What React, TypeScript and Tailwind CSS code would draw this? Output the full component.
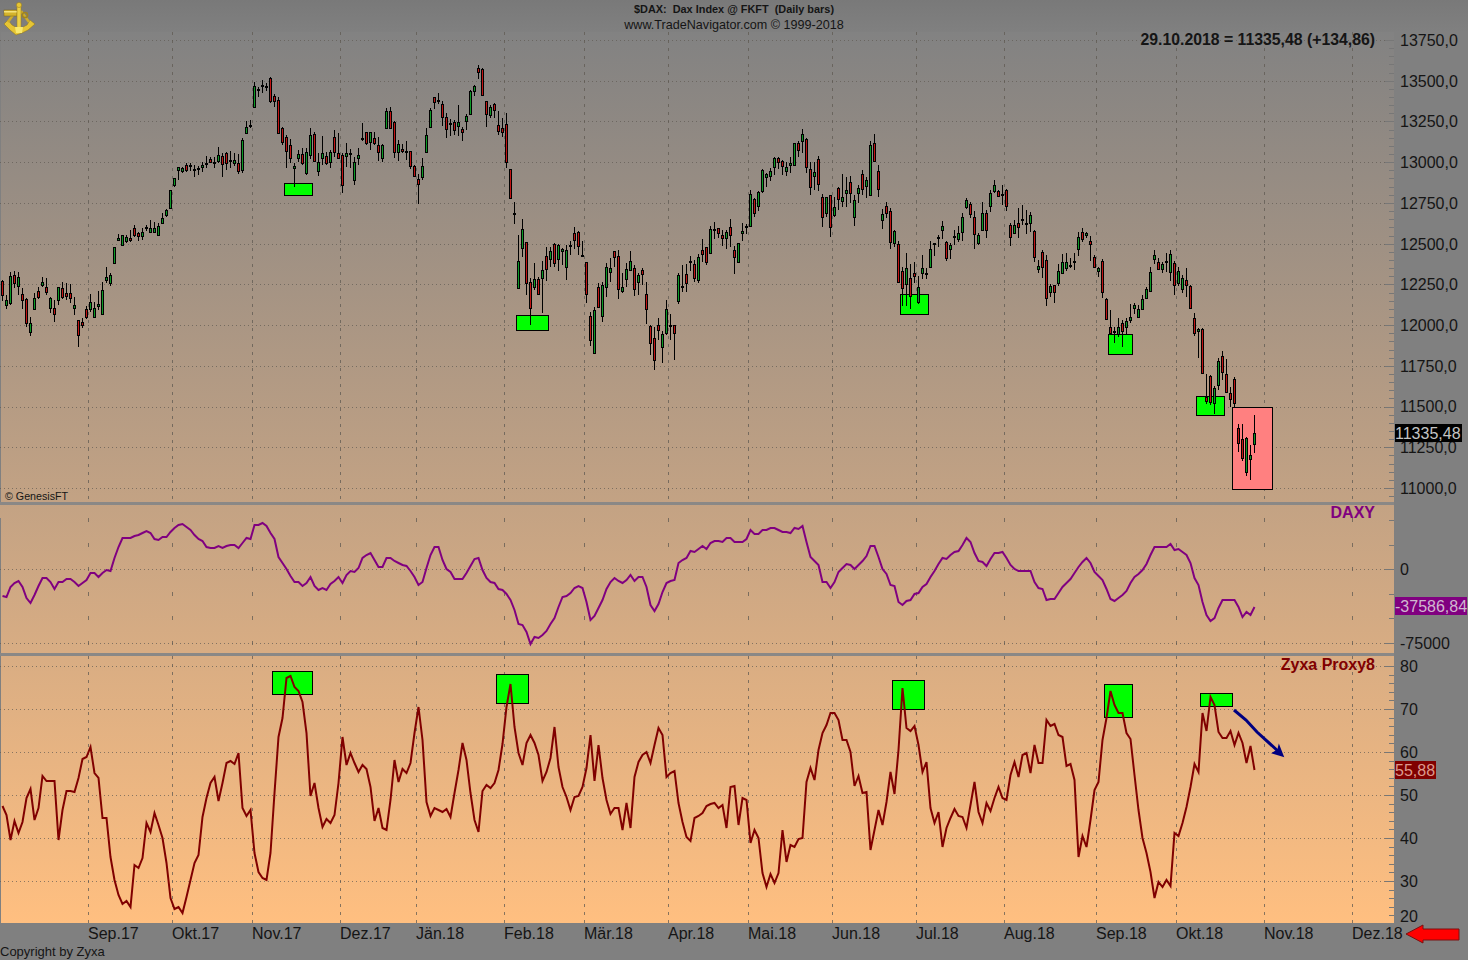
// DAX daily chart with two indicator panes. All data is in page pixels.
type Candle = [number, number, number, number, number] // high, body top, body bottom, low, 1 = up

const candles: Candle[] = [
  [280,281,295,301,0],[295,300,305,309,1],[272,276,303,305,1],[271,275,283,288,0],[272,277,286,295,1],[288,294,300,309,0],[298,299,323,327,0],[317,323,332,336,1],
  [293,298,309,309,1],[287,291,297,299,0],[277,282,285,287,1],[278,287,292,295,0],[297,298,308,313,1],[300,308,314,322,0],[287,287,300,305,1],[282,288,297,299,0],
  [283,293,296,300,0],[284,293,298,303,0],[297,305,308,315,1],[320,320,335,347,0],[318,322,325,328,0],[306,309,317,319,0],[294,302,309,312,1],[302,308,317,318,1],
  [291,304,306,310,1],[282,290,314,315,1],[267,277,280,283,1],[273,275,283,286,1],[247,247,263,264,1],[234,238,240,241,1],[235,235,245,246,1],[235,237,241,243,1],
  [230,238,240,242,0],[225,228,235,237,0],[232,233,236,241,0],[228,232,236,240,1],[225,227,228,231,1],[220,228,232,233,1],[222,228,232,233,1],[223,226,235,235,1],
  [213,218,223,224,1],[209,210,215,217,1],[190,190,208,208,1],[178,178,185,187,1],[167,167,170,180,1],[167,168,171,173,1],[163,165,170,172,0],[163,165,166,171,0],
  [165,169,170,177,1],[166,168,168,175,1],[162,165,167,172,1],[156,163,164,168,1],[157,159,162,163,0],[157,162,163,168,1],[147,155,161,163,1],[153,156,164,177,0],
  [152,153,163,170,0],[151,160,161,168,1],[153,160,163,166,1],[154,163,171,174,0],[138,140,170,173,1],[121,127,133,133,1],[120,125,126,128,1],[82,86,107,107,1],
  [87,89,90,97,1],[80,85,85,93,1],[83,86,87,91,1],[77,78,101,103,0],[94,96,101,107,0],[97,100,133,134,0],[127,128,142,145,0],[135,137,151,168,0],
  [139,145,158,163,0],[163,166,168,187,1],[150,154,158,162,1],[148,154,163,165,0],[148,152,173,175,1],[128,135,155,159,1],[132,134,161,162,0],[153,162,171,176,1],
  [136,153,158,165,1],[152,156,163,165,0],[150,152,162,168,1],[130,137,152,157,0],[133,153,158,159,0],[153,155,185,193,0],[143,153,156,167,1],[149,153,154,168,1],
  [157,162,180,185,1],[148,155,158,165,1],[123,138,138,141,1],[132,132,143,145,0],[132,132,142,150,1],[132,138,143,145,0],[137,145,152,161,0],[144,145,158,162,1],
  [108,111,128,129,1],[107,111,128,128,0],[121,122,152,158,0],[140,144,152,161,1],[144,149,151,153,0],[141,151,152,160,1],[151,151,166,169,0],[165,166,176,177,0],
  [174,179,184,204,0],[158,166,177,180,1],[128,135,152,153,1],[108,110,127,127,1],[97,97,102,109,0],[93,100,100,104,1],[101,104,117,126,0],[113,117,129,138,0],
  [119,123,123,136,1],[120,122,130,135,0],[105,122,126,136,1],[127,129,132,141,0],[114,116,121,130,1],[90,91,114,115,1],[85,86,91,96,1],[65,68,72,79,0],
  [68,69,95,95,0],[101,101,114,127,0],[105,107,115,118,1],[103,104,110,118,0],[111,125,131,135,0],[118,128,132,137,0],[113,124,162,168,0],[169,169,198,198,0],
  [202,213,214,224,1],[235,261,288,288,1],[219,229,248,257,1],[242,242,283,295,0],[278,282,308,325,0],[263,279,287,290,1],[277,279,294,294,0],[261,270,278,313,1],
  [247,256,269,281,0],[247,251,259,267,1],[243,244,263,267,0],[244,245,259,271,1],[248,249,251,265,1],[245,250,267,280,1],[241,245,246,255,1],[227,233,240,249,0],
  [231,232,246,255,0],[241,255,256,257,0],[262,262,294,303,0],[312,316,340,346,0],[307,310,353,353,1],[283,287,307,307,0],[282,285,316,322,1],[263,267,287,297,1],
  [258,268,272,282,1],[251,251,257,267,0],[250,256,289,299,0],[273,287,291,293,1],[263,269,279,287,1],[251,261,270,271,1],[265,268,289,296,0],[273,275,282,295,1],
  [268,270,274,285,0],[282,294,309,324,0],[325,326,343,355,0],[327,338,360,370,0],[318,325,330,340,0],[331,334,347,363,1],[300,309,333,335,1],[314,325,325,340,1],
  [325,325,333,360,0],[273,275,301,304,1],[265,286,286,292,1],[264,274,283,292,0],[256,261,261,271,1],[260,264,278,282,0],[254,257,280,283,1],[239,250,254,262,0],
  [247,247,262,265,0],[226,229,253,254,1],[222,229,229,239,1],[228,228,233,238,0],[230,235,238,246,0],[230,232,238,249,1],[219,227,235,247,0],[246,250,257,274,0],
  [243,243,262,263,1],[223,231,233,241,1],[224,226,226,234,1],[190,194,226,227,1],[198,199,213,217,0],[191,192,206,211,1],[169,170,191,193,1],[173,174,177,187,1],
  [168,171,176,181,1],[157,158,167,175,1],[157,158,162,169,0],[160,161,166,175,0],[162,167,171,176,1],[157,163,165,173,1],[143,143,165,166,1],[141,143,150,157,0],
  [129,134,141,153,1],[138,139,167,173,0],[162,169,187,195,0],[162,172,176,190,1],[156,159,184,191,0],[194,197,217,227,0],[197,197,213,217,1],[195,195,227,237,0],
  [197,207,215,217,1],[187,188,199,210,0],[174,197,201,207,1],[177,190,193,207,1],[176,182,193,203,0],[195,200,217,226,1],[185,188,193,203,1],[170,174,189,195,0],
  [177,180,186,198,1],[141,145,195,195,1],[134,143,161,161,0],[165,171,189,197,0],[209,214,220,229,1],[202,206,213,218,0],[208,211,242,249,0],[230,231,243,247,1],
  [241,244,282,282,0],[267,271,288,306,0],[253,268,284,306,1],[264,278,296,309,0],[262,273,276,283,0],[276,287,302,304,1],[255,268,273,279,1],[268,273,273,279,1],
  [241,249,267,267,1],[243,243,244,256,0],[235,237,237,247,1],[221,226,230,239,1],[241,242,258,261,0],[243,245,249,259,1],[230,236,236,245,1],[226,233,239,242,1],
  [213,217,232,241,1],[198,200,207,209,1],[202,204,214,218,0],[211,217,234,249,0],[233,235,243,245,1],[202,213,230,230,1],[210,213,230,238,0],[190,193,206,212,1],
  [180,185,191,193,1],[190,191,196,196,0],[185,194,194,205,1],[189,190,206,211,0],[223,225,237,246,0],[220,225,233,234,1],[208,223,227,238,0],[205,219,219,225,1],
  [210,223,223,234,1],[212,215,223,232,1],[230,231,257,262,0],[260,266,269,273,1],[250,252,267,278,0],[255,260,298,306,0],[284,286,292,297,1],[285,285,292,303,0],
  [264,271,283,286,1],[254,262,273,274,1],[253,262,268,271,1],[258,265,265,268,1],[253,261,261,270,1],[232,237,249,256,1],[228,232,239,242,0],[232,233,235,238,1],
  [236,241,244,261,0],[255,257,267,268,0],[267,268,271,277,1],[259,261,292,298,0],[298,299,319,320,0],[310,327,333,335,0],[327,331,331,343,1],[318,327,334,337,1],
  [320,323,331,347,0],[318,321,327,334,1],[304,317,320,323,1],[303,305,308,314,1],[305,309,317,318,1],[295,299,309,310,1],[287,289,298,298,1],[267,272,291,291,1],
  [250,255,259,264,1],[258,262,269,270,0],[262,264,269,273,1],[253,261,262,272,0],[250,254,272,281,1],[261,263,285,295,0],[267,271,283,286,1],[275,278,289,293,1],
  [268,280,285,297,0],[285,286,308,309,0],[313,318,333,336,0],[328,329,331,358,1],[328,329,373,373,0],[374,397,401,404,0],[375,376,402,405,0],[386,388,403,414,1],
  [358,361,385,390,1],[351,356,372,380,0],[359,374,392,393,0],[387,393,399,407,0],[377,379,403,407,0],[424,428,443,452,0],[424,439,458,461,0],[437,438,472,476,1],
  [445,455,459,480,1],[415,433,444,453,1],
]

const daxy = [
  596,597,587,583,581,587,598,603,595,586,578,578,582,589,582,582,579,579,582,586,583,580,573,573,577,573,570,571,558,547,538,538,538,536,535,533,531,533,539,540,
  537,537,532,528,525,524,527,530,535,539,541,547,548,548,546,548,546,545,545,548,543,538,539,525,525,523,526,533,539,557,563,569,576,582,582,586,583,577,586,590,
  588,590,584,581,577,583,575,571,572,568,558,555,553,560,567,567,558,558,561,563,565,566,571,577,585,582,568,555,547,547,560,569,572,579,579,579,573,566,559,558,
  570,578,582,583,589,590,594,600,610,624,625,632,644,637,638,635,631,624,618,607,597,596,593,588,586,588,602,620,616,608,600,589,582,578,581,583,580,575,581,577,
  577,587,605,611,604,592,583,581,580,563,560,558,551,552,549,546,549,543,541,541,542,538,538,542,542,542,539,530,534,534,530,530,528,528,530,532,532,533,528,529,
  526,542,557,561,565,582,582,588,582,572,568,564,565,569,565,561,556,546,546,557,569,574,585,586,602,605,601,600,594,593,587,584,577,571,564,558,559,555,552,551,
  545,538,542,553,561,562,566,559,553,553,552,558,565,569,571,571,571,571,582,588,589,600,599,599,593,587,583,579,573,567,562,558,563,572,576,580,589,599,601,598,
  595,591,583,577,574,570,564,555,547,547,547,547,544,550,549,552,555,563,578,585,602,615,621,618,608,600,600,600,600,607,617,612,615,607,
]

const proxy = [
  806,815,840,821,833,822,798,789,820,808,776,781,781,781,840,810,791,791,792,778,759,757,747,773,778,818,818,857,880,895,904,901,907,865,868,858,823,832,813,825,
  838,863,898,909,907,913,897,880,863,855,817,798,783,777,801,783,763,761,764,753,808,816,810,853,872,878,880,853,793,737,718,678,676,687,691,702,733,796,783,808,
  827,819,823,815,783,737,765,753,763,772,765,769,787,821,808,828,830,800,760,782,769,773,763,733,707,740,802,816,808,810,812,809,817,793,770,743,760,793,820,832,
  791,785,788,783,770,744,707,684,727,753,765,743,735,743,755,781,772,758,727,767,787,797,810,797,796,787,768,735,781,745,778,800,814,808,808,830,803,828,777,762,
  755,752,763,745,728,735,777,773,771,803,822,837,841,818,816,813,806,804,803,808,805,828,787,786,825,798,800,843,830,838,873,887,874,883,873,830,862,845,847,839,
  838,782,768,780,750,733,725,713,713,720,740,740,752,786,776,793,792,850,830,810,825,802,772,794,750,688,728,731,726,745,772,762,808,823,812,847,828,818,809,816,
  817,828,805,782,812,823,803,811,798,787,798,800,775,762,777,755,753,773,745,763,763,720,726,724,735,737,766,764,780,857,836,847,820,790,782,740,718,691,705,713,
  713,733,739,775,810,838,853,872,898,882,887,880,886,833,836,823,807,787,764,772,713,731,697,705,732,738,738,731,745,733,743,763,746,770,
]

const priceLevels = ['13750,0','13500,0','13250,0','13000,0','12750,0','12500,0','12250,0','12000,0','11750,0','11500,0','11250,0','11000,0']
const proxyLevels = ['80','70','60','50','40','30']
const months = [
  ['Sep.17', 84], ['Okt.17', 80], ['Nov.17', 88], ['Dez.17', 76], ['Jän.18', 88], ['Feb.18', 80], ['Mär.18', 84], ['Apr.18', 80],
  ['Mai.18', 84], ['Jun.18', 84], ['Jul.18', 88], ['Aug.18', 92], ['Sep.18', 80], ['Okt.18', 88], ['Nov.18', 88], ['Dez.18', 50],
] as const
const monthX = [88, 172, 252, 340, 416, 504, 584, 668, 748, 832, 916, 1004, 1096, 1176, 1264, 1352]

const priceGrid = Array.from({ length: 12 }, (_, i) => 40 + i * 40.73)
const priceTicks = Array.from({ length: 57 }, (_, i) => 40 + i * 8.146)
const daxyTicks = [520, 545, 569, 594, 618, 643]
const proxyGrid = [666, 709, 752, 795, 838, 881, 923]
const proxyTicks = Array.from({ length: 31 }, (_, i) => 666 + i * 8.6)

const cx = (i: number) => 2.5 + 4 * i
const linePoints = (ys: number[]) => ys.map((y, i) => `${cx(i)},${y}`).join(' ')

const Box = ({ x, y, w, h, fill = '#00ff00' }: { x: number; y: number; w: number; h: number; fill?: string }) => (
  <rect x={x + 0.5} y={y + 0.5} width={w} height={h} fill={fill} stroke="#000" shapeRendering="crispEdges" />
)

function Grid({ top, bottom, rows, ticks, majors, dash }: { top: number; bottom: number; rows: number[]; ticks: number[]; majors: number[]; dash: string }) {
  return (
    <g shapeRendering="crispEdges">
      <line x1={0.5} x2={0.5} y1={top} y2={bottom} stroke="#808080" />
      {monthX.map((x) => (
        <line key={x} x1={x + 0.5} x2={x + 0.5} y1={top} y2={bottom} stroke="#5f5a52" strokeOpacity={0.75} strokeDasharray={dash} />
      ))}
      {rows.map((y) => (
        <line key={y} x1={0} x2={1386} y1={Math.round(y) + 0.5} y2={Math.round(y) + 0.5} stroke="#5f5a52" strokeOpacity={0.7} strokeDasharray="1 3" />
      ))}
      {ticks.map((y) => (
        <line key={y} x1={1389} x2={1394} y1={Math.round(y) + 0.5} y2={Math.round(y) + 0.5} stroke="#777" />
      ))}
      {majors.map((y) => (
        <line key={y} x1={1385} x2={1394} y1={Math.round(y) + 0.5} y2={Math.round(y) + 0.5} stroke="#777" />
      ))}
    </g>
  )
}

function Logo() {
  return (
    <svg width="36" height="36" viewBox="0 0 36 36" className="absolute left-0 top-0">
      <path d="M4 24 L8 20 L12 25 L19 29 L27 25 L30 20 L35 24 L28 30 L22 33 L16 35 L10 30 Z" fill="#e6c534" stroke="#8f7517" strokeWidth="0.5" />
      <path d="M16 11 L8 22 M21 11 L29 22" stroke="#cfae2a" strokeWidth="2.5" fill="none" />
      <rect x="4" y="10" width="13" height="6" fill="#d4b32c" stroke="#7d6613" strokeWidth="0.5" />
      <rect x="4" y="11" width="13" height="1.5" fill="#f3e27a" />
      <rect x="17" y="5" width="4" height="23" fill="#ecd044" stroke="#96791a" strokeWidth="0.5" />
      <circle cx="19" cy="5" r="2.6" fill="#e6c534" stroke="#96791a" strokeWidth="0.5" />
      <circle cx="25" cy="15" r="2.6" fill="none" stroke="#a1841f" strokeWidth="1.5" />
      <path d="M15 27 L23 27 L22 33 L16 33 Z" fill="#f8e86e" />
    </svg>
  )
}

export default function App() {
  return (
    <div className="relative flex h-[960px] w-[1468px] flex-col overflow-hidden bg-[#808080] font-['Liberation_Sans',Arial,sans-serif] text-[#151515]">
      <header className="relative flex h-[32px] flex-col items-center bg-linear-to-b from-[#797979] to-[#808080] pt-[3px]">
        <Logo />
        <div className="text-[10.9px] font-bold leading-[12px] whitespace-pre">$DAX:  Dax Index @ FKFT  (Daily bars)</div>
        <div className="mt-[3px] text-[12.6px] leading-[15px]">www.TradeNavigator.com © 1999-2018</div>
      </header>

      <div className="flex h-[891px]">
        <div className="flex w-[1394px] flex-col bg-linear-to-b from-[#828282] to-[#ffbf80]">
          <section className="relative h-[473px] border-b-[3px] border-[#8a8886]">
            <svg width="1394" height="470" viewBox="0 32 1394 470" className="block">
              <Grid top={32} bottom={502} rows={priceGrid} ticks={priceTicks} majors={priceGrid} dash="3 5" />
              <Box x={284} y={183} w={28} h={12} />
              <Box x={516} y={315} w={32} h={15} />
              <Box x={900} y={294} w={28} h={20} />
              <Box x={1108} y={334} w={24} h={20} />
              <Box x={1196} y={396} w={28} h={19} />
              <Box x={1232} y={407} w={40} h={82} fill="#ff8080" />
              <g shapeRendering="crispEdges">
                {candles.map(([high, top, bottom, low, up], i) => (
                  <g key={i}>
                    <line x1={cx(i)} x2={cx(i)} y1={high} y2={low} stroke="#000" />
                    <rect x={cx(i) - 1} y={top + 0.5} width={2} height={Math.max(bottom - top, 1)} fill={up ? '#0c9a26' : '#c21414'} stroke="#000" />
                  </g>
                ))}
              </g>
            </svg>
            <div className="absolute right-[19px] top-[-1px] text-[15.8px] font-bold leading-[18px]">29.10.2018 = 11335,48 (+134,86)</div>
            <div className="absolute bottom-[-1px] left-[5px] text-[10.7px] leading-[13px]">© GenesisFT</div>
          </section>

          <section className="relative h-[151px] border-b-[3px] border-[#8a8886]">
            <svg width="1394" height="148" viewBox="0 505 1394 148" className="block">
              <Grid top={518} bottom={653} rows={[569, 643]} ticks={daxyTicks} majors={[569, 643]} dash="4 20.6" />
              <polyline points={linePoints(daxy)} fill="none" stroke="#800080" strokeWidth="2" />
            </svg>
            <div className="absolute right-[19px] top-[-1px] text-[16px] font-bold leading-[18px] text-[#800080]">DAXY</div>
          </section>

          <section className="relative h-[267px]">
            <svg width="1394" height="267" viewBox="0 656 1394 267" className="block">
              <Grid top={656} bottom={923} rows={proxyGrid} ticks={proxyTicks} majors={proxyGrid} dash="3 5" />
              <Box x={272} y={671} w={40} h={23} />
              <Box x={496} y={674} w={32} h={29} />
              <Box x={892} y={680} w={32} h={29} />
              <Box x={1104} y={684} w={28} h={33} />
              <Box x={1200} y={693} w={32} h={13} />
              <polyline points={linePoints(proxy)} fill="none" stroke="#800000" strokeWidth="2" />
              <path d="M1234 710 L1246 720 L1257 732 L1279 752" fill="none" stroke="#000080" strokeWidth="3" />
              <path d="M1283 756 L1273 753 L1278 750 L1279 746 Z" fill="#000080" stroke="#000080" strokeWidth="1.5" />
            </svg>
            <div className="absolute right-[19px] top-0 text-[16px] font-bold leading-[18px] text-[#800000]">Zyxa Proxy8</div>
          </section>
        </div>

        <div className="relative flex w-[74px] flex-col text-[16px] leading-[16px]">
          <div className="flex h-[473px] flex-col justify-between pb-[8px] pl-[6px] pt-[1px]">
            {priceLevels.map((level) => (
              <div key={level}>{level}</div>
            ))}
          </div>
          <div className="flex h-[151px] flex-col gap-[58px] pl-[6px] pt-[57px]">
            <div>0</div>
            <div>-75000</div>
          </div>
          <div className="flex h-[267px] flex-col gap-[27px] pl-[6px] pt-[3px]">
            {proxyLevels.map((level) => (
              <div key={level}>{level}</div>
            ))}
            <div className="-mt-[8px]">20</div>
          </div>
          <div className="absolute left-[1px] top-[392px] bg-black pr-[1px] pt-[1px] leading-[17px] text-[#c4c4c4]">11335,48</div>
          <div className="absolute left-[1px] top-[565px] bg-[#800080] pt-[1px] leading-[17px] text-[#d0b8d0]">-37586,84</div>
          <div className="absolute left-[1px] top-[729px] bg-[#800000] pr-[1px] pt-[1px] leading-[17px] text-[#dc9a8e]">55,88</div>
        </div>
      </div>

      <footer className="relative flex-1">
        <div className="flex pl-[88px] pt-[3px] text-[16px] leading-[16px]">
          {months.map(([label, width]) => (
            <div key={label} className="shrink-0" style={{ width }}>
              {label}
            </div>
          ))}
        </div>
        <div className="mt-[2px] text-[13px] leading-[16px]">Copyright by Zyxa</div>
        <svg width="56" height="20" viewBox="0 0 56 20" className="absolute left-[1405px] top-[1px]">
          <path d="M1 10 L18 1 L18 5 L54 5 L54 16 L18 16 L18 19 Z" fill="#ff0000" stroke="#7a1010" />
        </svg>
      </footer>
    </div>
  )
}
